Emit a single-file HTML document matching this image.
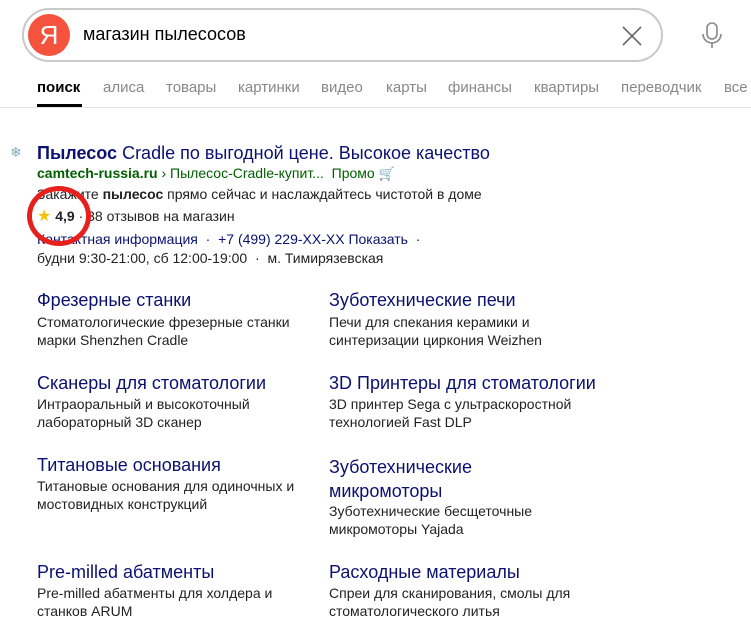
<!DOCTYPE html>
<html><head><meta charset="utf-8"><style>
body{margin:0;width:751px;height:640px;background:#fff;font-family:"Liberation Sans",sans-serif;position:relative;overflow:hidden;color:#000}
.a{position:absolute;white-space:nowrap}
.t{color:#0b1170;font-size:18px}
.d{font-size:14px;color:#222;line-height:18px}
.tab{position:absolute;top:79px;font-size:15px;color:#888}
</style></head><body>
<div class="a" style="left:22px;top:8px;width:641px;height:54px;border:2px solid #c9c9c9;border-radius:28px;box-sizing:border-box"></div>
<div class="a" style="left:28px;top:14px;width:42px;height:42px;border-radius:50%;background:#f5533d;color:#fff;font-size:26px;text-align:center;line-height:42px">Я</div>
<div class="a" style="left:83px;top:24px;font-size:18px;color:#000">магазин пылесосов</div>
<svg class="a" style="left:620px;top:24px" width="24" height="24"><path d="M3 3L21 21M21 3L3 21" stroke="#666" stroke-width="1.6"/></svg>
<svg class="a" style="left:700px;top:21px" width="24" height="28"><rect x="7" y="2" width="10" height="16" rx="5" fill="none" stroke="#888" stroke-width="1.6"/><path d="M3 13a9 9 0 0 0 18 0M12 22v5" fill="none" stroke="#888" stroke-width="1.6"/></svg>
<div class="tab" style="left:37px;color:#000;font-weight:bold">поиск</div>
<div class="a" style="left:37px;top:104px;width:45px;height:3px;background:#000"></div>
<div class="tab" style="left:103px">алиса</div>
<div class="tab" style="left:166px">товары</div>
<div class="tab" style="left:238px">картинки</div>
<div class="tab" style="left:321px">видео</div>
<div class="tab" style="left:386px">карты</div>
<div class="tab" style="left:448px">финансы</div>
<div class="tab" style="left:534px">квартиры</div>
<div class="tab" style="left:621px">переводчик</div>
<div class="tab" style="left:724px">все</div>
<div class="a" style="left:0;top:107px;width:751px;height:1px;background:#e6e6e6"></div>

<div class="a" style="left:10px;top:144px;color:#8ab;font-size:14px">❄</div>
<div class="a t" style="left:37px;top:143px"><b>Пылесос</b> Cradle по выгодной цене. Высокое качество</div>
<div class="a" style="left:37px;top:165px;font-size:14px;color:#006000"><b>camtech-russia.ru</b> › Пылесос-Cradle-купит...&nbsp; Промо <span style="font-size:13px">🛒</span></div>
<div class="a d" style="left:37px;top:185px">Закажите <b>пылесос</b> прямо сейчас и наслаждайтесь чистотой в доме</div>
<div class="a d" style="left:37px;top:207px"><span style="color:#f5c000;font-size:16px">★</span> <b>4,9</b> · 38 отзывов на магазин</div>
<div class="a d" style="left:37px;top:230px;color:#0b1170">Контактная информация &nbsp;·&nbsp; +7 (499) 229-XX-XX Показать &nbsp;·</div>
<div class="a d" style="left:37px;top:249px">будни 9:30-21:00, сб 12:00-19:00 &nbsp;·&nbsp; м. Тимирязевская</div>
<div class="a" style="left:27px;top:186px;width:64px;height:60px;border:5px solid #e8201c;border-radius:50%;box-sizing:border-box"></div>

<div class="a t" style="left:37px;top:290px">Фрезерные станки</div>
<div class="a d" style="left:37px;top:313px">Стоматологические фрезерные станки<br>марки Shenzhen Cradle</div>
<div class="a t" style="left:329px;top:290px">Зуботехнические печи</div>
<div class="a d" style="left:329px;top:313px">Печи для спекания керамики и<br>синтеризации циркония Weizhen</div>

<div class="a t" style="left:37px;top:373px">Сканеры для стоматологии</div>
<div class="a d" style="left:37px;top:395px">Интраоральный и высокоточный<br>лабораторный 3D сканер</div>
<div class="a t" style="left:329px;top:373px">3D Принтеры для стоматологии</div>
<div class="a d" style="left:329px;top:395px">3D принтер Sega с ультраскоростной<br>технологией Fast DLP</div>

<div class="a t" style="left:37px;top:455px">Титановые основания</div>
<div class="a d" style="left:37px;top:477px">Титановые основания для одиночных и<br>мостовидных конструкций</div>
<div class="a t" style="left:329px;top:455px;line-height:24px">Зуботехнические<br>микромоторы</div>
<div class="a d" style="left:329px;top:502px">Зуботехнические бесщеточные<br>микромоторы Yajada</div>

<div class="a t" style="left:37px;top:562px">Pre-milled абатменты</div>
<div class="a d" style="left:37px;top:584px">Pre-milled абатменты для холдера и<br>станков ARUM</div>
<div class="a t" style="left:329px;top:562px">Расходные материалы</div>
<div class="a d" style="left:329px;top:584px">Спреи для сканирования, смолы для<br>стоматологического литья</div>
</body></html>
